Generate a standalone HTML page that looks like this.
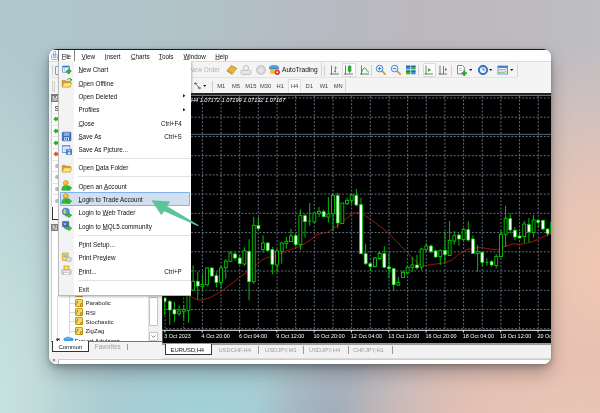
<!DOCTYPE html>
<html><head><meta charset="utf-8"><title>MT4 File menu</title>
<style>
html,body{margin:0;padding:0}
body{width:600px;height:413px;overflow:hidden;position:relative;font-family:"Liberation Sans",sans-serif;
background:
 radial-gradient(ellipse 235px 170px at 570px 440px, rgba(236,198,182,1) 0%, rgba(232,192,178,.85) 45%, rgba(224,184,172,0) 100%),
 radial-gradient(ellipse 250px 240px at 625px 280px, rgba(244,200,176,1) 0%, rgba(240,198,178,.8) 40%, rgba(236,196,180,0) 100%),
 radial-gradient(ellipse 80px 130px at 332px 445px, rgba(156,166,182,.9) 0%, rgba(158,168,182,.5) 50%, rgba(160,172,186,0) 100%),
 radial-gradient(ellipse 170px 170px at 205px 445px, rgba(158,212,218,1) 0%, rgba(160,210,216,.65) 50%, rgba(160,210,216,0) 100%),
 radial-gradient(ellipse 150px 400px at -30px 430px, rgba(204,232,226,1) 0%, rgba(200,228,224,.7) 45%, rgba(196,224,222,0) 100%),
 linear-gradient(90deg,#afc8ce 0%,#b1c4ca 28%,#b6bac2 52%,#bdb8bc 75%,#bebec3 100%);}
#win{position:absolute;left:49px;top:49px;width:502px;height:315px;border-radius:8px;overflow:hidden;background:#f3f3f3;
 box-shadow:0 0 3px rgba(20,25,35,.18),0 3px 6px rgba(15,15,20,.22),0 9px 18px rgba(15,15,20,.26);}
#win{will-change:transform}
#win div,#win span{position:absolute;box-sizing:border-box}
.t{font-size:6.3px;line-height:10px;height:10px;white-space:nowrap;color:#111}
.g{color:#9a9a9a}
u{text-decoration-color:rgba(0,0,0,.45);text-underline-offset:0px}
</style></head>
<body>
<div id="win">
<div style="left:0.00px;top:0.00px;width:502.00px;height:1.20px;background:#1c1c1c"></div>
<div style="left:0.00px;top:1.20px;width:502.00px;height:10.80px;background:#fff"></div>
<div style="left:0.00px;top:12.00px;width:502.00px;height:1.00px;background:#dcdcdc"></div>
<div style="left:2.20px;top:4.60px;width:6.60px;height:6.20px;border:1px solid #8db6ec;border-radius:1.5px;background:#eef4fc"></div>
<div style="left:3.60px;top:2.00px;width:3.80px;height:3.00px;border:.9px solid #8db6ec;border-bottom:none;border-radius:2px 2px 0 0"></div>
<div style="left:4.00px;top:6.40px;width:3.00px;height:2.20px;border:.7px solid #9cc0ee;background:#dbe8f8"></div>
<div style="left:9.00px;top:1.20px;width:17.40px;height:11.00px;border-left:1px solid #7e7e7e;border-right:1px solid #7e7e7e;background:#fff"></div>
<span class="t" style="left:12.80px;top:2.90px;letter-spacing:-.3px"><u>F</u>ile</span>
<span class="t" style="left:32.60px;top:2.90px;"><u>V</u>iew</span>
<span class="t" style="left:55.80px;top:2.90px;"><u>I</u>nsert</span>
<span class="t" style="left:82.00px;top:2.90px;"><u>C</u>harts</span>
<span class="t" style="left:109.80px;top:2.90px;"><u>T</u>ools</span>
<span class="t" style="left:134.40px;top:2.90px;"><u>W</u>indow</span>
<span class="t" style="left:166.20px;top:2.90px;"><u>H</u>elp</span>
<div style="left:0.00px;top:13.00px;width:502.00px;height:16.00px;background:#f4f4f4"></div>
<div style="left:0.00px;top:29.00px;width:502.00px;height:15.40px;background:#f4f4f4"></div>
<div style="left:1.50px;top:13.50px;width:271.00px;height:15.00px;border-right:1px solid #d4d4d4;border-bottom:1px solid #e2e2e2;border-radius:0 0 2px 0"></div>
<div style="left:272.50px;top:13.50px;width:196.30px;height:15.00px;border-right:1px solid #d4d4d4;border-bottom:1px solid #e2e2e2;border-radius:0 0 2.5px 0"></div>
<div style="left:1.50px;top:29.50px;width:295.10px;height:14.70px;border-right:1px solid #d4d4d4;border-radius:0 0 2px 0"></div>
<span class="t" style="left:140.40px;top:15.70px;color:#b4b4b4;font-size:6.3px">New Order</span>
<svg style="position:absolute;left:176.8px;top:14.7px" width="12" height="12" viewBox="0 0 12 12"><path d="M1 6.5 5.5 1.5 11 4.5 6.5 10Z" fill="#e9b23c" stroke="#a8741a" stroke-width=".7"/><path d="M1 6.5 6.5 10 6.5 11 1 7.6Z" fill="#c98a1e"/><path d="M6.5 10 11 4.5 11 5.6 6.5 11Z" fill="#f6e3a6"/></svg>
<svg style="position:absolute;left:191.0px;top:14.8px" width="12" height="12" viewBox="0 0 12 12"><rect x="1" y="6" width="10" height="4.5" rx="1.5" fill="#e6e6e6" stroke="#b0b0b0" stroke-width=".7"/><circle cx="6" cy="4" r="2.6" fill="#eee" stroke="#b0b0b0" stroke-width=".7"/></svg>
<svg style="position:absolute;left:206.2px;top:15.0px" width="12" height="12" viewBox="0 0 12 12"><circle cx="6" cy="6" r="4.6" fill="#d6d6d6" stroke="#bdbdbd" stroke-width=".7"/><path d="M6 3.5v5M4.3 5v3M7.7 5v3" stroke="#f4f4f4" stroke-width=".9"/></svg>
<svg style="position:absolute;left:219.3px;top:14.6px" width="13" height="12" viewBox="0 0 13 12"><ellipse cx="6" cy="3.6" rx="5" ry="2.6" fill="#4e9fe0"/><path d="M1.5 4.5h9l-1 5.5h-7z" fill="#f1c232"/><path d="M1.5 4.6h9" stroke="#2f7fc8" stroke-width="1"/><circle cx="9.3" cy="8.3" r="2.6" fill="#e02a1a"/><rect x="8.3" y="7.4" width="2" height="1.8" fill="#fff"/></svg>
<span class="t" style="left:233.00px;top:15.50px;font-size:6.6px">AutoTrading</span>
<div style="left:274.60px;top:15.50px;width:1.00px;height:11.50px;background:#cfcfcf"></div>
<div style="left:293.20px;top:14.20px;width:13.40px;height:13.80px;background:#fbfbfb;border:1px solid #d9d9d9;border-radius:1px"></div>
<svg style="position:absolute;left:279.5px;top:15.0px" width="12" height="12" viewBox="0 0 12 12"><path d="M2.5 1.5v9M1 10h9" stroke="#555" stroke-width=".8" fill="none"/><path d="M6.3 2.5v6M5 7.5h1.3M6.3 3.6h1.3" stroke="#2a9a2a" stroke-width=".9" fill="none"/></svg>
<svg style="position:absolute;left:294.0px;top:15.0px" width="12" height="12" viewBox="0 0 12 12"><path d="M2.5 1.5v9M1 10h9" stroke="#555" stroke-width=".8" fill="none"/><path d="M6.6 1v8" stroke="#1f8a1f" stroke-width=".8"/><rect x="5.2" y="2.6" width="2.8" height="4.6" fill="#2fb52f" stroke="#1f8a1f" stroke-width=".6"/></svg>
<svg style="position:absolute;left:309.5px;top:15.0px" width="12" height="12" viewBox="0 0 12 12"><path d="M2.5 1.5v9M1 10h9" stroke="#555" stroke-width=".8" fill="none"/><path d="M2.6 8.5C4 3.5 6 3 7 5s2 3 3 3.2" stroke="#2a9a2a" stroke-width=".9" fill="none"/></svg>
<div style="left:322.40px;top:15.50px;width:0.80px;height:11.50px;background:#d2d2d2"></div>
<svg style="position:absolute;left:326.0px;top:15.3px" width="12" height="12" viewBox="0 0 12 12"><path d="M7 7l3.2 3.2" stroke="#d2a030" stroke-width="1.8" stroke-linecap="round"/><circle cx="4.6" cy="4.6" r="3.3" fill="#e8f2fc" stroke="#3f86d8" stroke-width="1"/><path d="M3 4.6h3.2M4.6 3v3.2" stroke="#2a72c8" stroke-width=".9"/></svg>
<svg style="position:absolute;left:340.7px;top:15.3px" width="12" height="12" viewBox="0 0 12 12"><path d="M7 7l3.2 3.2" stroke="#d2a030" stroke-width="1.8" stroke-linecap="round"/><circle cx="4.6" cy="4.6" r="3.3" fill="#e8f2fc" stroke="#3f86d8" stroke-width="1"/><path d="M3 4.6h3.2" stroke="#2a72c8" stroke-width=".9"/></svg>
<svg style="position:absolute;left:355.6px;top:15.2px" width="12" height="12" viewBox="0 0 12 12"><rect x="1" y="1.5" width="4.4" height="4" fill="#3a8ad8"/><rect x="6.2" y="1.5" width="4.4" height="4" fill="#3fae3f"/><rect x="1" y="6.3" width="4.4" height="4" fill="#3fae3f"/><rect x="6.2" y="6.3" width="4.4" height="4" fill="#3a8ad8"/><path d="M1 2.4h4.4M6.2 2.4h4.4M1 7.2h4.4M6.2 7.2h4.4" stroke="#1d4f9a" stroke-width=".9"/></svg>
<div style="left:369.40px;top:15.50px;width:0.80px;height:11.50px;background:#d2d2d2"></div>
<div style="left:373.60px;top:14.20px;width:13.40px;height:13.80px;background:#fbfbfb;border:1px solid #d9d9d9;border-radius:1px"></div>
<svg style="position:absolute;left:374.4px;top:15.0px" width="12" height="12" viewBox="0 0 12 12"><path d="M3 1.5v9M1.5 10h8.5" stroke="#555" stroke-width=".8" fill="none"/><path d="M5 4l3 2-3 2z" fill="#2fb52f"/></svg>
<svg style="position:absolute;left:388.4px;top:15.0px" width="12" height="12" viewBox="0 0 12 12"><path d="M3 1.5v9M1.5 10h8.5M6.5 2v8" stroke="#555" stroke-width=".8" fill="none"/><path d="M8 4l2.2 1.5L8 7z" fill="#d83a2a"/></svg>
<div style="left:402.00px;top:15.50px;width:0.80px;height:11.50px;background:#d2d2d2"></div>
<svg style="position:absolute;left:407.0px;top:14.8px" width="14" height="13" viewBox="0 0 14 13"><path d="M1.5 1.5h5l1.8 1.8v6.5h-6.8z" fill="#fff" stroke="#666" stroke-width=".8"/><path d="M3 4.5h3M3 6.3h3" stroke="#999" stroke-width=".6"/><path d="M8.2 6.5v5.4M5.5 9.2h5.4" stroke="#28a428" stroke-width="2"/></svg>
<div style="left:419.60px;top:20.40px;width:3.40px;height:2.00px;"><svg width="3.4" height="2" viewBox="0 0 3.4 2" style="position:absolute;left:0;top:0"><path d="M0 0h3.4L1.7 2z" fill="#222"/></svg></div>
<svg style="position:absolute;left:428.0px;top:15.4px" width="12" height="12" viewBox="0 0 12 12"><circle cx="6" cy="6" r="4.7" fill="#2f74c8" stroke="#1d4f9a" stroke-width=".6"/><circle cx="6" cy="6" r="3.1" fill="#eaf2fb"/><path d="M6 3.8V6h1.8" stroke="#1d4f9a" stroke-width=".8" fill="none"/></svg>
<div style="left:440.40px;top:20.40px;width:3.40px;height:2.00px;"><svg width="3.4" height="2" viewBox="0 0 3.4 2" style="position:absolute;left:0;top:0"><path d="M0 0h3.4L1.7 2z" fill="#222"/></svg></div>
<svg style="position:absolute;left:448.0px;top:15.4px" width="12" height="12" viewBox="0 0 12 12"><rect x="1" y="2" width="9.6" height="8" fill="#f4f8fc" stroke="#3f7fcf" stroke-width=".8"/><rect x="1" y="2" width="9.6" height="2" fill="#3f86d8"/><path d="M2 6.2l2-.8 2 .6 3.6-.8" stroke="#d0683a" stroke-width=".8" fill="none"/><path d="M2 8.6l2.4-.6 2 .4 3.2-.8" stroke="#38a838" stroke-width=".8" fill="none"/></svg>
<div style="left:460.60px;top:20.40px;width:3.40px;height:2.00px;"><svg width="3.4" height="2" viewBox="0 0 3.4 2" style="position:absolute;left:0;top:0"><path d="M0 0h3.4L1.7 2z" fill="#222"/></svg></div>
<svg style="position:absolute;left:143.6px;top:31.8px" width="10" height="10" viewBox="0 0 10 10"><path d="M1 2.600h2.400M2.600 1.400 3.800 2.600 2.600 3.800M8 7h-2.400M6.400 5.800 5.200 7l1.200 1.200M3.600 4.200l2 1.400" stroke="#333" stroke-width=".8" fill="none"/></svg>
<div style="left:154.00px;top:36.00px;width:3.40px;height:2.00px;"><svg width="3.4" height="2" viewBox="0 0 3.4 2" style="position:absolute;left:0;top:0"><path d="M0 0h3.4L1.7 2z" fill="#222"/></svg></div>
<div style="left:162.60px;top:31.50px;width:1.00px;height:11.00px;background:#c9c9c9"></div>
<div style="left:239.00px;top:30.00px;width:13.40px;height:14.00px;background:#fcfcfc;border:1px solid #dedede;border-bottom:none"></div>
<span class="t" style="left:164.20px;width:16px;text-align:center;top:31.60px;font-size:5.8px;color:#444">M1</span>
<span class="t" style="left:179.00px;width:16px;text-align:center;top:31.60px;font-size:5.8px;color:#444">M5</span>
<span class="t" style="left:193.80px;width:16px;text-align:center;top:31.60px;font-size:5.8px;color:#444">M15</span>
<span class="t" style="left:208.60px;width:16px;text-align:center;top:31.60px;font-size:5.8px;color:#444">M30</span>
<span class="t" style="left:223.20px;width:16px;text-align:center;top:31.60px;font-size:5.8px;color:#444">H1</span>
<span class="t" style="left:237.60px;width:16px;text-align:center;top:31.60px;font-size:5.8px;color:#444">H4</span>
<span class="t" style="left:252.20px;width:16px;text-align:center;top:31.60px;font-size:5.8px;color:#444">D1</span>
<span class="t" style="left:267.00px;width:16px;text-align:center;top:31.60px;font-size:5.8px;color:#444">W1</span>
<span class="t" style="left:281.20px;width:16px;text-align:center;top:31.60px;font-size:5.8px;color:#444">MN</span>
<svg style="position:absolute;left:0;top:0" width="502" height="315" viewBox="49 49 502 315"><defs><clipPath id="cc"><rect x="162.2" y="93" width="389.8" height="250"/></clipPath></defs><g clip-path="url(#cc)">
<rect x="162.2" y="93" width="389.8" height="250" fill="#000"/>
<path d="M165.09 96V330M183.74 96V330M202.40 96V330M221.06 96V330M239.71 96V330M258.37 96V330M277.02 96V330M295.68 96V330M314.34 96V330M332.99 96V330M351.65 96V330M370.30 96V330M388.96 96V330M407.62 96V330M426.27 96V330M444.93 96V330M463.58 96V330M482.24 96V330M500.90 96V330M519.55 96V330M538.21 96V330M162.2 98.00H552M162.2 117.22H552M162.2 136.45H552M162.2 155.68H552M162.2 174.90H552M162.2 194.12H552M162.2 213.35H552M162.2 232.58H552M162.2 251.80H552M162.2 271.02H552M162.2 290.25H552M162.2 309.48H552M162.2 328.70H552" stroke="#6e7f92" stroke-width="0.9" stroke-dasharray="1.9 1.7" fill="none"/>
<rect x="162.2" y="93" width="389.8" height="2" fill="#242424"/><rect x="162.2" y="95" width="389.8" height="0.9" fill="#7c7c7c"/>
<path d="M162.2 134.3H552" stroke="#58687a" stroke-width="1"/>
<path d="M162.2 330.3H552" stroke="#f0f0f0" stroke-width="1"/>
<path d="M164.90 330v2.6M202.21 330v2.6M239.52 330v2.6M276.83 330v2.6M314.14 330v2.6M351.45 330v2.6M388.76 330v2.6M426.07 330v2.6M463.38 330v2.6M500.69 330v2.6M538.00 330v2.6" stroke="#f0f0f0" stroke-width="0.9"/>
<polyline points="170,280 180,290 191.3,297 197.3,299.7 202,300.3 210,297.7 220.7,291.7 228,286.3 238.7,278.3 246.7,272.3 254.7,266.3 261.3,260.3 268,257.3 274.7,256.3 281.3,253.3 288,250.3 294.7,248.3 301.3,245.7 310.7,240 316,235 327.3,232.3 332.7,229 340,223.7 346.7,218.3 352,214 356.7,212.3 362.7,214.3 369.3,218.3 376,223 378,225 388.7,233 397.3,242.3 406.7,251.7 416,261.7 420,265 424,265.7 433.3,264.3 444,263 452,260 458.7,254.3 466.7,249.7 473.3,248.3 481.3,247.4 489.3,249 497.3,249.7 505.3,246.3 513.3,243.7 519.3,244.6 528,243 536,240.3 544,236.3 550.7,234" stroke="#bc1515" stroke-width="0.85" fill="none"/>
<path d="M164.62 297V315.3M169.78 300V325M174.44 302V322M179.11 305.3V311M179.11 313.7V316M183.77 305.3V309.7M183.77 311.3V319.3M188.44 288V290M188.44 310.7V322.7M193.10 265.3V281.3M193.10 290V291.3M197.76 272V299.7M202.43 274V284.5M202.43 286.5V290M207.09 267.3V268M207.09 284.7V286.5M211.76 267.3V276.7M216.42 272.7V287.3M221.08 265.3V268M221.08 282.5V288.5M225.75 259.3V261M225.75 267.7V278.7M230.41 251.3V253M230.41 261.3V262M235.08 252V260.7M239.74 255.3V264.7M244.40 247.3V250.7M244.40 264V266M249.07 239.3V300.3M253.73 217V225.3M253.73 281.7V284M258.40 217V230M263.06 235.3V243M263.06 249.6V252.7M267.72 242V251M272.39 246.7V274.3M277.05 249V251M277.05 265V272.3M281.72 242V243M281.72 251.3V263.7M286.38 236.7V241.3M286.38 243.7V248.7M291.04 228.7V236M291.04 241.6V242M295.71 234V246.7M300.37 209V215.7M300.37 244.7V250M305.04 214V237.7M309.70 203V225.7M308.20 221h3M314.36 222V222.6M319.03 207V211.4M319.03 213.7V217M323.69 209.7V217M328.36 197V214M328.36 217V222.6M333.02 193.3V195.4M333.02 213.7V231M337.68 193V228.3M342.35 223.4V223.7M347.01 197.7V200.3M347.01 203.7V205M351.68 193.3V195M351.68 200.3V203.7M356.34 189V206.3M361.00 197.7V254.6M365.67 243.7V265M370.33 262.3V271M375.00 257V258M375.00 266.6V267.7M379.66 251.7V253.3M379.66 258.6V260M384.32 246.3V268.3M388.99 252.5V278.3M393.65 268.3V291M398.32 277V282.6M398.32 285V285.7M402.98 270.3V272.3M402.98 277.5V278M407.64 266.3V267.2M407.64 272.8V274.5M412.31 257V265M412.31 267.4V271.7M416.97 255V269.7M421.64 248.3V249M421.64 267V270.3M426.30 243V246M426.30 249.7V252M430.96 244.3V253.3M435.63 249.3V257.7M440.29 249.7V250.3M440.29 256.7V265M444.96 231.7V263.7M449.62 221V240.3M449.62 255.4V255.7M454.28 231V235.7M454.28 241V244.7M458.95 233.3V245.7M463.61 228V229.3M463.61 239.4V240M468.28 221.3V241.7M472.94 235.4V253.7M477.60 245V251.7M477.60 253.5V271.7M482.27 251.7V266.3M486.93 258.3V265.7M485.43 262.4h3M491.60 260V266.7M496.26 254.3V256.3M496.26 265.4V268.3M500.92 230.3V234.3M500.92 256.6V257.7M505.59 205.7V218.3M505.59 234.3V247M510.25 213.7V233.7M514.92 227V240.3M519.58 231.7V238.3M524.24 221V224M524.24 236.6V243M528.91 218V242.3M533.57 215V220M533.57 232.6V237.7M538.24 219.7V227.7M542.90 219.7V230.3M547.56 228.3V236.3" stroke="#00e000" stroke-width="0.85" fill="none"/>
<g fill="#000" stroke="#00e000" stroke-width="0.8"><rect x="177.66" y="311" width="2.9" height="2.70"/><rect x="182.32" y="309.7" width="2.9" height="1.60"/><rect x="186.99" y="290" width="2.9" height="20.70"/><rect x="191.65" y="281.3" width="2.9" height="8.70"/><rect x="200.98" y="284.5" width="2.9" height="2.00"/><rect x="205.64" y="268" width="2.9" height="16.70"/><rect x="219.63" y="268" width="2.9" height="14.50"/><rect x="224.30" y="261" width="2.9" height="6.70"/><rect x="228.96" y="253" width="2.9" height="8.30"/><rect x="242.95" y="250.7" width="2.9" height="13.30"/><rect x="252.28" y="225.3" width="2.9" height="56.40"/><rect x="261.61" y="243" width="2.9" height="6.60"/><rect x="275.60" y="251" width="2.9" height="14.00"/><rect x="280.27" y="243" width="2.9" height="8.30"/><rect x="284.93" y="241.3" width="2.9" height="2.40"/><rect x="289.59" y="236" width="2.9" height="5.60"/><rect x="298.92" y="215.7" width="2.9" height="29.00"/><rect x="312.91" y="213" width="2.9" height="9.00"/><rect x="317.58" y="211.4" width="2.9" height="2.30"/><rect x="326.91" y="214" width="2.9" height="3.00"/><rect x="331.57" y="195.4" width="2.9" height="18.30"/><rect x="340.90" y="203" width="2.9" height="20.40"/><rect x="345.56" y="200.3" width="2.9" height="3.40"/><rect x="350.23" y="195" width="2.9" height="5.30"/><rect x="373.55" y="258" width="2.9" height="8.60"/><rect x="378.21" y="253.3" width="2.9" height="5.30"/><rect x="396.87" y="282.6" width="2.9" height="2.40"/><rect x="401.53" y="272.3" width="2.9" height="5.20"/><rect x="406.19" y="267.2" width="2.9" height="5.60"/><rect x="410.86" y="265" width="2.9" height="2.40"/><rect x="420.19" y="249" width="2.9" height="18.00"/><rect x="424.85" y="246" width="2.9" height="3.70"/><rect x="438.84" y="250.3" width="2.9" height="6.40"/><rect x="448.17" y="240.3" width="2.9" height="15.10"/><rect x="452.83" y="235.7" width="2.9" height="5.30"/><rect x="462.16" y="229.3" width="2.9" height="10.10"/><rect x="476.15" y="251.7" width="2.9" height="1.80"/><rect x="494.81" y="256.3" width="2.9" height="9.10"/><rect x="499.47" y="234.3" width="2.9" height="22.30"/><rect x="504.14" y="218.3" width="2.9" height="16.00"/><rect x="522.79" y="224" width="2.9" height="12.60"/><rect x="532.12" y="220" width="2.9" height="12.60"/><rect x="550.78" y="222" width="2.9" height="11.70"/></g>
<g fill="#fff" stroke="#00e000" stroke-width="0.7"><rect x="163.17" y="298" width="2.9" height="3.30"/><rect x="168.33" y="301.3" width="2.9" height="8.70"/><rect x="172.99" y="309.7" width="2.9" height="4.30"/><rect x="196.31" y="281.3" width="2.9" height="4.70"/><rect x="210.31" y="268" width="2.9" height="8.00"/><rect x="214.97" y="275.7" width="2.9" height="6.70"/><rect x="233.63" y="254" width="2.9" height="4.00"/><rect x="238.29" y="258" width="2.9" height="5.70"/><rect x="247.62" y="251.3" width="2.9" height="30.40"/><rect x="256.95" y="225.6" width="2.9" height="3.10"/><rect x="266.27" y="243" width="2.9" height="7.40"/><rect x="270.94" y="249.7" width="2.9" height="14.60"/><rect x="294.26" y="235.7" width="2.9" height="9.00"/><rect x="303.59" y="215.7" width="2.9" height="6.00"/><rect x="322.24" y="211.7" width="2.9" height="5.00"/><rect x="336.23" y="195.7" width="2.9" height="27.30"/><rect x="354.89" y="195.4" width="2.9" height="9.60"/><rect x="359.55" y="204.7" width="2.9" height="49.00"/><rect x="364.22" y="253.7" width="2.9" height="10.00"/><rect x="368.88" y="263.7" width="2.9" height="2.90"/><rect x="382.87" y="253.7" width="2.9" height="13.50"/><rect x="387.54" y="267" width="2.9" height="1.70"/><rect x="392.20" y="268.7" width="2.9" height="16.00"/><rect x="415.52" y="265" width="2.9" height="2.80"/><rect x="429.51" y="246" width="2.9" height="5.70"/><rect x="434.18" y="251" width="2.9" height="6.00"/><rect x="443.51" y="250.3" width="2.9" height="4.30"/><rect x="457.50" y="235" width="2.9" height="4.00"/><rect x="466.83" y="229.7" width="2.9" height="10.30"/><rect x="471.49" y="239" width="2.9" height="14.30"/><rect x="480.82" y="252.3" width="2.9" height="10.00"/><rect x="490.15" y="261.7" width="2.9" height="3.30"/><rect x="508.80" y="218.7" width="2.9" height="11.30"/><rect x="513.47" y="230.3" width="2.9" height="6.70"/><rect x="518.13" y="236" width="2.9" height="2.00"/><rect x="527.46" y="224.6" width="2.9" height="7.40"/><rect x="536.79" y="220.3" width="2.9" height="2.00"/><rect x="541.45" y="220.3" width="2.9" height="8.70"/><rect x="546.11" y="229" width="2.9" height="4.70"/></g>
<rect x="162.2" y="96" width="1.90" height="233.6" fill="#000"/>
<text x="191" y="101.6" font-family="Liberation Sans, sans-serif" font-size="5.6" font-style="italic" fill="#fff">H4  1.07172 1.07199 1.07132 1.07167</text>
<text x="164.30" y="338.1" font-family="Liberation Sans, sans-serif" font-size="5.45" fill="#fff">3 Oct 2023</text>
<text x="201.61" y="338.1" font-family="Liberation Sans, sans-serif" font-size="5.45" fill="#fff">4 Oct 20:00</text>
<text x="238.92" y="338.1" font-family="Liberation Sans, sans-serif" font-size="5.45" fill="#fff">6 Oct 04:00</text>
<text x="276.23" y="338.1" font-family="Liberation Sans, sans-serif" font-size="5.45" fill="#fff">9 Oct 12:00</text>
<text x="313.54" y="338.1" font-family="Liberation Sans, sans-serif" font-size="5.45" fill="#fff">10 Oct 20:00</text>
<text x="350.85" y="338.1" font-family="Liberation Sans, sans-serif" font-size="5.45" fill="#fff">12 Oct 04:00</text>
<text x="388.16" y="338.1" font-family="Liberation Sans, sans-serif" font-size="5.45" fill="#fff">13 Oct 12:00</text>
<text x="425.47" y="338.1" font-family="Liberation Sans, sans-serif" font-size="5.45" fill="#fff">16 Oct 20:00</text>
<text x="462.78" y="338.1" font-family="Liberation Sans, sans-serif" font-size="5.45" fill="#fff">18 Oct 04:00</text>
<text x="500.09" y="338.1" font-family="Liberation Sans, sans-serif" font-size="5.45" fill="#fff">19 Oct 12:00</text>
<text x="537.40" y="338.1" font-family="Liberation Sans, sans-serif" font-size="5.45" fill="#fff">20 Oct 20:00</text>
</g></svg>
<div style="left:113.20px;top:294.00px;width:388.80px;height:1.60px;background:#9a9a9a"></div>
<div style="left:113.20px;top:295.60px;width:388.80px;height:13.40px;background:#f2f2f2"></div>
<div style="left:0.00px;top:309.00px;width:502.00px;height:1.00px;background:#d9d9d9"></div>
<div style="left:0.00px;top:310.00px;width:502.00px;height:5.00px;background:#fff"></div>
<div style="left:115.60px;top:294.60px;width:47.40px;height:11.40px;background:#fff;border:1px solid #333;border-top:none"></div>
<span class="t" style="left:121.60px;top:296.20px;font-size:5.8px">EURUSD,H4</span>
<span class="t g" style="left:169.40px;top:296.20px;font-size:5.8px">USDCHF,H4</span>
<span class="t g" style="left:216.00px;top:296.20px;font-size:5.8px">USDJPY,M1</span>
<span class="t g" style="left:260.00px;top:296.20px;font-size:5.8px">USDJPY,H4</span>
<span class="t g" style="left:304.00px;top:296.20px;font-size:5.8px">CHFJPY,H1</span>
<div style="left:209.40px;top:297.00px;width:0.80px;height:7.50px;background:#9a9a9a"></div>
<div style="left:254.00px;top:297.00px;width:0.80px;height:7.50px;background:#9a9a9a"></div>
<div style="left:298.60px;top:297.00px;width:0.80px;height:7.50px;background:#9a9a9a"></div>
<div style="left:342.60px;top:297.00px;width:0.80px;height:7.50px;background:#9a9a9a"></div>
<div style="left:0.00px;top:44.40px;width:113.20px;height:265.60px;background:#f3f3f3"></div>
<div style="left:2.40px;top:45.40px;width:111.60px;height:7.40px;background:#7c7c7c"></div>
<span class="t" style="left:3.20px;top:44.50px;color:#fff;font-size:6.6px">M</span>
<div style="left:2.40px;top:52.80px;width:111.60px;height:104.60px;background:#fff;border-left:1px solid #cfcfcf"></div>
<span class="t" style="left:5.60px;top:55.30px;font-size:6.4px">S</span>
<div style="left:2.40px;top:64.20px;width:110.80px;height:0.70px;background:#e4e4e4"></div>
<svg style="position:absolute;left:4.4px;top:67.3px" width="8" height="6" viewBox="0 0 8 6"><path d="M.3 3 3.200.3V1.500H8v3H3.200v1.200z" fill="#22b022"/></svg>
<div style="left:2.40px;top:75.80px;width:110.80px;height:0.70px;background:#e4e4e4"></div>
<svg style="position:absolute;left:4.4px;top:78.9px" width="8" height="6" viewBox="0 0 8 6"><path d="M.3 3 3.200.3V1.500H8v3H3.200v1.200z" fill="#22b022"/></svg>
<div style="left:2.40px;top:87.40px;width:110.80px;height:0.70px;background:#e4e4e4"></div>
<svg style="position:absolute;left:4.4px;top:90.5px" width="8" height="6" viewBox="0 0 8 6"><path d="M.3 3 3.200.3V1.500H8v3H3.200v1.200z" fill="#22b022"/></svg>
<div style="left:2.40px;top:99.00px;width:110.80px;height:0.70px;background:#e4e4e4"></div>
<svg style="position:absolute;left:4.4px;top:102.1px" width="8" height="6" viewBox="0 0 8 6"><path d="M.3 3 3.200.3V1.500H8v3H3.200v1.200z" fill="#e0502a"/></svg>
<div style="left:2.40px;top:110.60px;width:110.80px;height:0.70px;background:#e4e4e4"></div>
<div style="left:6.40px;top:114.70px;width:5.60px;height:4.00px;background:#b8b8b8;border-radius:2px"></div>
<div style="left:2.40px;top:122.20px;width:110.80px;height:0.70px;background:#e4e4e4"></div>
<div style="left:6.40px;top:126.30px;width:5.60px;height:4.00px;background:#b8b8b8;border-radius:2px"></div>
<div style="left:2.40px;top:133.80px;width:110.80px;height:0.70px;background:#e4e4e4"></div>
<div style="left:6.40px;top:137.90px;width:5.60px;height:4.00px;background:#b8b8b8;border-radius:2px"></div>
<div style="left:2.40px;top:145.40px;width:110.80px;height:0.70px;background:#e4e4e4"></div>
<div style="left:6.40px;top:149.50px;width:5.60px;height:4.00px;background:#b8b8b8;border-radius:2px"></div>
<div style="left:3.00px;top:158.00px;width:28.00px;height:12.60px;border-left:1px solid #333;border-bottom:1px solid #333;background:#fff"></div>
<div style="left:2.40px;top:175.20px;width:111.60px;height:7.20px;background:#7c7c7c"></div>
<span class="t" style="left:3.20px;top:174.10px;color:#fff;font-size:6.6px">N</span>
<div style="left:2.40px;top:182.40px;width:108.60px;height:110.60px;background:#fff;border-left:1px solid #cfcfcf;border-right:1px solid #d8d8d8"></div>
<div style="left:20.00px;top:247.00px;width:0.60px;height:38.00px;background:#d8d8d8"></div>
<div style="left:20.00px;top:244.40px;width:6.00px;height:0.60px;background:#d8d8d8"></div>
<div style="left:26.00px;top:240.40px;width:8.00px;height:8.00px;background:#f6d860;border:0.7px solid #c49a1a;border-radius:1px"></div>
<span class="t" style="left:27.200000000000003px;top:239.39999999999998px;font-size:5.5px;font-style:italic;color:#6a4a00">f</span>
<div style="left:30.60px;top:244.80px;width:3.60px;height:3.60px;background:#f0c030;border:0.6px solid #a87a10;border-radius:50%"></div>
<span class="t" style="left:36.50px;top:240.00px;font-size:6.1px;color:#222"></span>
<div style="left:20.00px;top:253.70px;width:6.00px;height:0.60px;background:#d8d8d8"></div>
<div style="left:26.00px;top:249.70px;width:8.00px;height:8.00px;background:#f6d860;border:0.7px solid #c49a1a;border-radius:1px"></div>
<span class="t" style="left:27.200000000000003px;top:248.7px;font-size:5.5px;font-style:italic;color:#6a4a00">f</span>
<div style="left:30.60px;top:254.10px;width:3.60px;height:3.60px;background:#f0c030;border:0.6px solid #a87a10;border-radius:50%"></div>
<span class="t" style="left:36.50px;top:249.30px;font-size:6.1px;color:#222">Parabolic</span>
<div style="left:20.00px;top:263.00px;width:6.00px;height:0.60px;background:#d8d8d8"></div>
<div style="left:26.00px;top:259.00px;width:8.00px;height:8.00px;background:#f6d860;border:0.7px solid #c49a1a;border-radius:1px"></div>
<span class="t" style="left:27.200000000000003px;top:258.0px;font-size:5.5px;font-style:italic;color:#6a4a00">f</span>
<div style="left:30.60px;top:263.40px;width:3.60px;height:3.60px;background:#f0c030;border:0.6px solid #a87a10;border-radius:50%"></div>
<span class="t" style="left:36.50px;top:258.60px;font-size:6.1px;color:#222">RSI</span>
<div style="left:20.00px;top:272.30px;width:6.00px;height:0.60px;background:#d8d8d8"></div>
<div style="left:26.00px;top:268.30px;width:8.00px;height:8.00px;background:#f6d860;border:0.7px solid #c49a1a;border-radius:1px"></div>
<span class="t" style="left:27.200000000000003px;top:267.3px;font-size:5.5px;font-style:italic;color:#6a4a00">f</span>
<div style="left:30.60px;top:272.70px;width:3.60px;height:3.60px;background:#f0c030;border:0.6px solid #a87a10;border-radius:50%"></div>
<span class="t" style="left:36.50px;top:267.90px;font-size:6.1px;color:#222">Stochastic</span>
<div style="left:20.00px;top:281.60px;width:6.00px;height:0.60px;background:#d8d8d8"></div>
<div style="left:26.00px;top:277.60px;width:8.00px;height:8.00px;background:#f6d860;border:0.7px solid #c49a1a;border-radius:1px"></div>
<span class="t" style="left:27.200000000000003px;top:276.6px;font-size:5.5px;font-style:italic;color:#6a4a00">f</span>
<div style="left:30.60px;top:282.00px;width:3.60px;height:3.60px;background:#f0c030;border:0.6px solid #a87a10;border-radius:50%"></div>
<span class="t" style="left:36.50px;top:277.20px;font-size:6.1px;color:#222">ZigZag</span>
<div style="left:8.20px;top:247.00px;width:0.60px;height:42.00px;background:#dcdcdc"></div>
<div style="left:6.60px;top:288.60px;width:4.00px;height:4.00px;border:.6px solid #9a9a9a;background:#fff"></div>
<div style="left:7.60px;top:290.30px;width:2.00px;height:0.60px;background:#222"></div>
<div style="left:8.30px;top:289.60px;width:0.60px;height:2.00px;background:#222"></div>
<svg style="position:absolute;left:14.0px;top:286.6px" width="11" height="8" viewBox="0 0 11 8"><ellipse cx="5.5" cy="3.6" rx="5" ry="2.4" fill="#3f9ae0"/><ellipse cx="5" cy="2.2" rx="2.6" ry="1.8" fill="#58b0f0"/><path d="M3 5.5h5l-.6 2H3.6z" fill="#f1c232"/></svg>
<span class="t" style="left:25.50px;top:288.20px;font-size:6.5px">Expert Advisors</span>
<div style="left:99.40px;top:247.00px;width:11.40px;height:46.00px;background:#f0f0f0;border-left:1px solid #e2e2e2"></div>
<div style="left:100.20px;top:248.00px;width:9.10px;height:29.40px;background:#fff;border:1px solid #c4c4c4;border-radius:1px"></div>
<div style="left:100.20px;top:283.00px;width:9.10px;height:9.20px;background:#fff;border:1px solid #c4c4c4;border-radius:1px"></div>
<svg style="position:absolute;left:102.3px;top:286.4px" width="5" height="3" viewBox="0 0 5 3"><path d="M.5.5l2 2 2-2" stroke="#555" stroke-width=".7" fill="none"/></svg>
<div style="left:2.40px;top:292.60px;width:110.80px;height:12.00px;background:#f3f3f3"></div>
<div style="left:2.40px;top:292.40px;width:110.80px;height:0.80px;background:#777"></div>
<div style="left:3.00px;top:292.40px;width:37.40px;height:10.80px;background:#fff;border:1px solid #333;border-top:none"></div>
<span class="t" style="left:9.40px;top:293.00px;font-size:5.9px">Common</span>
<span class="t g" style="left:45.80px;top:293.00px;font-size:6.3px">Favorites</span>
<div style="left:78.20px;top:294.60px;width:0.80px;height:6.80px;background:#9a9a9a"></div>
<div style="left:0.00px;top:304.60px;width:113.20px;height:0.80px;background:#d0d0d0"></div>
<div style="left:0.00px;top:305.40px;width:113.20px;height:3.60px;background:#f3f3f3"></div>
<div style="left:9.00px;top:310.00px;width:493.00px;height:5.00px;background:#fff;border-left:1px solid #bbb;border-top:1px solid #ccc"></div>
<div style="left:0.00px;top:310.00px;width:9.00px;height:5.00px;background:#f3f3f3"></div>
<span class="t" style="left:3.20px;top:306.30px;font-size:6px;color:#444">×</span>
<div style="left:2.60px;top:15.50px;width:1.00px;height:11.50px;background:#cfcfcf"></div>
<div style="left:6.00px;top:16.50px;width:5.00px;height:9.00px;border:1px solid #6a9ad8;border-radius:1px;background:#eef4fc"></div>
<div style="left:2.60px;top:31.50px;width:1.00px;height:11.00px;background:#cfcfcf"></div>
<div style="left:5.40px;top:31.50px;width:1.00px;height:11.00px;background:#cfcfcf"></div>
<div style="left:9.10px;top:12.20px;width:132.90px;height:235.20px;background:#fff;border-left:1px solid #bcbcbc;border-bottom:1px solid #b8b8b8;box-shadow:1px 1px 2px rgba(0,0,0,.25)"></div>
<div style="left:10.10px;top:12.20px;width:14.50px;height:234.20px;background:#f3f3f3"></div>
<div style="left:11.00px;top:143.40px;width:129.80px;height:13.40px;background:#d2dfee;border:1px solid #7fb2f0;border-radius:1px"></div>
<span class="t" style="left:29.40px;top:16.40px;"><u>N</u>ew Chart</span>
<span class="t" style="left:29.40px;top:29.70px;"><u>O</u>pen Offline</span>
<span class="t" style="left:29.40px;top:43.00px;">Open Deleted</span>
<svg style="position:absolute;left:134.2px;top:45.3px" width="2.4" height="3.6" viewBox="0 0 2.4 3.6"><path d="M0 0l2.4 1.8L0 3.6z" fill="#222"/></svg>
<span class="t" style="left:29.40px;top:56.30px;">Profiles</span>
<svg style="position:absolute;left:134.2px;top:58.6px" width="2.4" height="3.6" viewBox="0 0 2.4 3.6"><path d="M0 0l2.4 1.8L0 3.6z" fill="#222"/></svg>
<span class="t" style="left:29.40px;top:69.60px;"><u>C</u>lose</span>
<span class="t" style="right:369.20px;top:69.60px;">Ctrl+F4</span>
<span class="t" style="left:29.40px;top:82.90px;"><u>S</u>ave As</span>
<span class="t" style="right:369.20px;top:82.90px;">Ctrl+S</span>
<span class="t" style="left:29.40px;top:96.20px;">Save As P<u>i</u>cture...</span>
<span class="t" style="left:29.40px;top:114.30px;">Open <u>D</u>ata Folder</span>
<span class="t" style="left:29.40px;top:132.60px;">Open an <u>A</u>ccount</span>
<span class="t" style="left:29.40px;top:146.00px;"><u>L</u>ogin to Trade Account</span>
<span class="t" style="left:29.40px;top:159.40px;">Login to <u>W</u>eb Trader</span>
<span class="t" style="left:29.40px;top:172.70px;">Login to <u>M</u>QL5.community</span>
<span class="t" style="left:29.40px;top:190.90px;">P<u>r</u>int Setup...</span>
<span class="t" style="left:29.40px;top:204.20px;">Print Pre<u>v</u>iew</span>
<span class="t" style="left:29.40px;top:217.60px;"><u>P</u>rint...</span>
<span class="t" style="right:369.20px;top:217.60px;">Ctrl+P</span>
<span class="t" style="left:29.40px;top:235.50px;">E<u>x</u>it</span>
<div style="left:28.60px;top:109.00px;width:113.00px;height:0.80px;background:#e2e2e2"></div>
<div style="left:28.60px;top:127.20px;width:113.00px;height:0.80px;background:#e2e2e2"></div>
<div style="left:28.60px;top:185.60px;width:113.00px;height:0.80px;background:#e2e2e2"></div>
<div style="left:28.60px;top:230.60px;width:113.00px;height:0.80px;background:#e2e2e2"></div>
<svg style="position:absolute;left:12.0px;top:15.1px" width="11" height="11" viewBox="0 0 11 11"><rect x="1.5" y="2" width="7" height="6.4" rx=".6" fill="#fbfdff" stroke="#4a86d0" stroke-width=".7"/><rect x="1.5" y="2" width="7" height="1.5" fill="#3f7fd0"/><path d="M3.4 4.6v2.800M2.800 5.400l.6-.8.600.8M2.800 6.600l.6.800.600-.8" stroke="#5a90d8" stroke-width=".45" fill="none"/><path d="M7.700 5.700v3.200M6.100 7.300h3.200" stroke="#118a22" stroke-width="2.200" stroke-linecap="round"/><path d="M7.700 5.900v2.800M6.300 7.300h2.800" stroke="#35c848" stroke-width="1.100" stroke-linecap="round"/></svg>
<svg style="position:absolute;left:12.0px;top:28.1px" width="11" height="11" viewBox="0 0 11 11"><path d="M1.200 3.400h3l.8.900h4.400v5.600H1.200z" fill="#d89a20" stroke="#a87410" stroke-width=".5"/><path d="M2.800 5.800h8.200L9.200 9.900H1.200z" fill="#fbe87a" stroke="#b88a18" stroke-width=".5"/><path d="M6.200 2.800c1.200-1.600 3-1.600 4.200-.2" stroke="#1f9a2f" stroke-width=".9" fill="none"/><path d="M9.400 1.200l2.200 1.800-2.600 1z" fill="#1f9a2f"/></svg>
<svg style="position:absolute;left:12.0px;top:81.5px" width="11" height="11" viewBox="0 0 11 11"><rect x="1.300" y="1.200" width="8.600" height="8.600" rx=".7" fill="#2f74c8" stroke="#1f559f" stroke-width=".6"/><rect x="2.800" y="1.500" width="5.600" height="3.400" fill="#9db4d4"/><path d="M3 2.300h5.200M3 3.300h5.200M3 4.300h5.200" stroke="#7f9ac0" stroke-width=".35"/><rect x="3.200" y="6.400" width="4.800" height="3" fill="#eef4fc"/><rect x="4.300" y="7" width="1" height="1.900" fill="#1f559f"/><rect x="6" y="7" width="1" height="1.900" fill="#1f559f"/></svg>
<svg style="position:absolute;left:12.0px;top:94.9px" width="11" height="11" viewBox="0 0 11 11"><rect x="1.400" y="1.600" width="7.400" height="7" fill="#f6faff" stroke="#4a86d0" stroke-width=".7"/><rect x="1.400" y="1.600" width="7.400" height="1" fill="#5a94dc"/><path d="M2.600 4h2.800M2.600 5.400h2.200M2.600 6.800h1.800" stroke="#7aa6e0" stroke-width=".5"/><rect x="5.400" y="5.200" width="5.400" height="5.200" rx=".5" fill="#2f74c8" stroke="#1f559f" stroke-width=".5"/><rect x="6.500" y="5.500" width="3.200" height="1.900" fill="#a8bedc"/><rect x="6.800" y="8.300" width="2.600" height="1.900" fill="#eef4fc"/></svg>
<svg style="position:absolute;left:12.0px;top:113.1px" width="11" height="11" viewBox="0 0 11 11"><path d="M1.200 3.400h3l.8.900h4.400v5.600H1.200z" fill="#d89a20" stroke="#a87410" stroke-width=".5"/><path d="M2.800 5.800h8.200L9.200 9.900H1.200z" fill="#fbe87a" stroke="#b88a18" stroke-width=".5"/></svg>
<svg style="position:absolute;left:12.0px;top:130.8px" width="11" height="11" viewBox="0 0 11 11"><path d="M.8 10.200c0-3.400 1.600-4.800 4-4.800s4 1.400 4 4.800z" fill="#2cc43c" stroke="#158a24" stroke-width=".5"/><circle cx="4.800" cy="3.100" r="2.500" fill="#f2b21c" stroke="#b87e10" stroke-width=".45"/><circle cx="4.400" cy="2.600" r="1.100" fill="#fbd660"/><path d="M8.300 5.800v4.400M6.100 8h4.400" stroke="#149024" stroke-width="2"/><path d="M8.300 6.200v3.600M6.500 8h3.600" stroke="#38d048" stroke-width="1"/></svg>
<svg style="position:absolute;left:12.0px;top:144.1px" width="11" height="11" viewBox="0 0 11 11"><path d="M.8 10.200c0-3.400 1.600-4.800 4-4.800s4 1.400 4 4.800z" fill="#2cc43c" stroke="#158a24" stroke-width=".5"/><circle cx="4.800" cy="3.100" r="2.500" fill="#f2b21c" stroke="#b87e10" stroke-width=".45"/><circle cx="4.400" cy="2.600" r="1.100" fill="#fbd660"/><path d="M4.800 7.200h2.800V5.700L10.800 8.200 7.600 10.700V9.200H4.800z" fill="#30c844" stroke="#138420" stroke-width=".5"/></svg>
<svg style="position:absolute;left:12.0px;top:157.9px" width="11" height="11" viewBox="0 0 11 11"><circle cx="4.8" cy="4.6" r="3.6" fill="#4a9ae6" stroke="#2a6ab8" stroke-width=".5"/><path d="M3 2.4c1.2-.4 2 .6 1.6 1.6s.8 1.4.2 2.600S3 6 2.400 5z" fill="#e8d050"/><path d="M4.800 7.200h2.800V5.700L10.800 8.200 7.600 10.700V9.200H4.800z" fill="#30c844" stroke="#138420" stroke-width=".5"/></svg>
<svg style="position:absolute;left:12.0px;top:171.3px" width="11" height="11" viewBox="0 0 11 11"><path d="M1.400 1.400h6.400v5.400H5L3.400 8.400V6.800H1.400z" fill="#4068b8" stroke="#2a4a90" stroke-width=".4"/><path d="M3 3l1 2 1-2" stroke="#fff" stroke-width=".6" fill="none"/><path d="M4.800 7.200h2.800V5.700L10.800 8.200 7.600 10.700V9.200H4.800z" fill="#30c844" stroke="#138420" stroke-width=".5"/></svg>
<svg style="position:absolute;left:12.0px;top:202.9px" width="11" height="11" viewBox="0 0 11 11"><rect x="1.200" y="1" width="6" height="7.600" fill="#f6dc60" stroke="#b8921a" stroke-width=".6"/><path d="M2.400 3h3.600M2.400 4.600h3.600" stroke="#4a86d0" stroke-width=".6"/><rect x="5.200" y="5.800" width="5" height="3.400" rx=".6" fill="#e4e4e4" stroke="#8a8a8a" stroke-width=".5"/></svg>
<svg style="position:absolute;left:12.0px;top:216.3px" width="11" height="11" viewBox="0 0 11 11"><rect x="3" y="1" width="5" height="4.400" fill="#f6dc60" stroke="#b8921a" stroke-width=".6"/><rect x="1" y="4.800" width="9" height="4.400" rx=".8" fill="#e4e4e4" stroke="#8a8a8a" stroke-width=".6"/><rect x="2.800" y="7.400" width="5.400" height="2.400" fill="#fff" stroke="#9a9a9a" stroke-width=".4"/></svg>
</div>
<svg style="position:absolute;left:0;top:0;pointer-events:none" width="600" height="413" viewBox="0 0 600 413"><path d="M151.400 200.300 170.200 201.600 167.200 206.300 198.800 225.200 198.200 226.200 164.200 211.200 161.400 215.200Z" fill="#5bc49a"/></svg>
</body></html>
